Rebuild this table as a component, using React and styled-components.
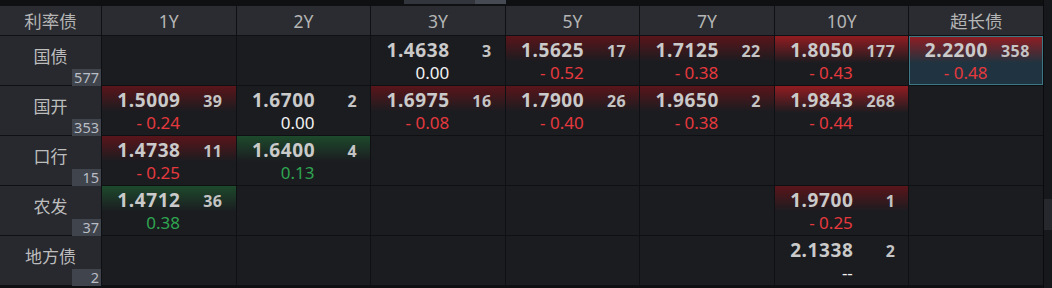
import React from 'react';
import styled, { createGlobalStyle, css } from 'styled-components';

const GlobalStyle = createGlobalStyle`
  html, body {
    margin: 0;
    padding: 0;
    background: #0e0f11;
  }
  body {
    font-family: "Noto Sans", "Noto Sans CJK SC", sans-serif;
  }
`;

const tenors = ['1Y', '2Y', '3Y', '5Y', '7Y', '10Y', '超长债'];

const rows = [
    {
        name: '国债',
        total: 577,
        cells: [
            null,
            null,
            { price: '1.4638', count: 3, change: '0.00' },
            { price: '1.5625', count: 17, change: '-0.52', tone: 'red' },
            { price: '1.7125', count: 22, change: '-0.38', tone: 'red' },
            { price: '1.8050', count: 177, change: '-0.43', tone: 'hot' },
            { price: '2.2200', count: 358, change: '-0.48', tone: 'selected' }
        ]
    },
    {
        name: '国开',
        total: 353,
        cells: [
            { price: '1.5009', count: 39, change: '-0.24', tone: 'red' },
            { price: '1.6700', count: 2, change: '0.00' },
            { price: '1.6975', count: 16, change: '-0.08', tone: 'red' },
            { price: '1.7900', count: 26, change: '-0.40', tone: 'red' },
            { price: '1.9650', count: 2, change: '-0.38', tone: 'red' },
            { price: '1.9843', count: 268, change: '-0.44', tone: 'hot' },
            null
        ]
    },
    {
        name: '口行',
        total: 15,
        cells: [
            { price: '1.4738', count: 11, change: '-0.25', tone: 'red' },
            { price: '1.6400', count: 4, change: '0.13', tone: 'green' },
            null, null, null, null, null
        ]
    },
    {
        name: '农发',
        total: 37,
        cells: [
            { price: '1.4712', count: 36, change: '0.38', tone: 'green' },
            null, null, null, null,
            { price: '1.9700', count: 1, change: '-0.25', tone: 'red' },
            null
        ]
    },
    {
        name: '地方债',
        total: 2,
        cells: [
            null, null, null, null, null,
            { price: '2.1338', count: 2, change: '--' },
            null
        ]
    }
];

const tones = {
    red: css`
        background: linear-gradient(to bottom, #5a151a 0%, #1b1c20 52%);
    `,
    hot: css`
        background: linear-gradient(to bottom, #921c21 0%, #1b1c20 55%);
    `,
    green: css`
        background: linear-gradient(to bottom, #1d4a2c 0%, #1b1c20 52%);
    `,
    selected: css`
        background: linear-gradient(to bottom, #931c22 0%, #1f3440 55%, #1f3440 100%);
        box-shadow: inset 0 0 0 1px #3e7884;
    `
};

function changeColor(change) {
    if (change.startsWith('-') && change !== '--') return '#e5393e';
    if (change === '0.00' || change === '--') return '#f2f2f2';
    return '#2fa551';
}

function formatChange(change) {
    if (change.startsWith('-') && change !== '--') return '- ' + change.slice(1);
    return change;
}

export default function App() {
    return (
        <Page>
            <GlobalStyle />
            <Main>
                <HScroll>
                    <HThumb />
                </HScroll>
                <Board>
                    <HeadCell>利率债</HeadCell>
                    {tenors.map(t => <HeadCell key={t}>{t}</HeadCell>)}
                    {rows.map(row => (
                        <React.Fragment key={row.name}>
                            <LabelCell>
                                <LabelText>{row.name}</LabelText>
                                <Badge>{row.total}</Badge>
                            </LabelCell>
                            {row.cells.map((cell, i) =>
                                cell ? (
                                    <Quote key={i} $tone={cell.tone}>
                                        <Price>{cell.price}</Price>
                                        <Count>{cell.count}</Count>
                                        <Change $color={changeColor(cell.change)}>
                                            {formatChange(cell.change)}
                                        </Change>
                                    </Quote>
                                ) : (
                                    <EmptyCell key={i} />
                                )
                            )}
                        </React.Fragment>
                    ))}
                </Board>
            </Main>
            <VScroll>
                <VThumb />
            </VScroll>
        </Page>
    );
}

const Page = styled.div`
    display: flex;
    width: 1052px;
    height: 288px;
    background: #0e0f11;
    overflow: hidden;
`;

const Main = styled.div`
    flex: 1;
    display: flex;
    flex-direction: column;
`;

const HScroll = styled.div`
    height: 6px;
    background: #0f1012;
    display: flex;
    align-items: flex-start;
`;

const HThumb = styled.div`
    margin-left: 404px;
    width: 102px;
    height: 4px;
    background: linear-gradient(to right, #32353c 0%, #32353c 70%, #464a52 70%, #464a52 100%);
`;

const Board = styled.div`
    display: grid;
    grid-template-columns: 101px repeat(7, 1fr);
    grid-template-rows: 29px repeat(5, 49px);
    gap: 1px;
    background: #0f1013;
    border-bottom: 1px solid #0f1013;
`;

const HeadCell = styled.div`
    display: flex;
    align-items: center;
    justify-content: center;
    background: #2a2c31;
    color: #b5b5b5;
    font-size: 17.5px;
`;

const LabelCell = styled.div`
    display: flex;
    flex-direction: column;
    align-items: center;
    padding-top: 9px;
    background: #27292e;
`;

const LabelText = styled.div`
    font-size: 17px;
    line-height: 24px;
    color: #bdbdbd;
`;

const Badge = styled.div`
    margin-top: auto;
    align-self: flex-end;
    width: 29px;
    height: 17px;
    box-sizing: border-box;
    padding-right: 2px;
    background: #40444c;
    color: #b9bdc5;
    font-size: 14.5px;
    line-height: 17px;
    text-align: right;
`;

const EmptyCell = styled.div`
    background: #1b1c20;
`;

const Quote = styled.div`
    display: grid;
    grid-template-columns: 78px 42px;
    grid-template-rows: 20px 20px;
    row-gap: 3px;
    align-items: baseline;
    padding-top: 4px;
    box-sizing: border-box;
    background: #1b1c20;
    ${p => p.$tone && tones[p.$tone]}
`;

const Price = styled.span`
    text-align: right;
    font-size: 19px;
    font-weight: 700;
    letter-spacing: 0.6px;
    margin-right: -0.6px;
    line-height: 20px;
    color: #cacaca;
`;

const Count = styled.span`
    text-align: right;
    font-size: 16px;
    font-weight: 700;
    letter-spacing: 0.5px;
    margin-right: -0.5px;
    line-height: 20px;
    color: #c4c4c4;
`;

const Change = styled.span`
    grid-column: 1;
    text-align: right;
    font-size: 17px;
    line-height: 20px;
    color: ${p => p.$color};
`;

const VScroll = styled.div`
    width: 8px;
    border-left: 1px solid #0a0b0d;
    background: #17181b;
    display: flex;
    flex-direction: column;
`;

const VThumb = styled.div`
    margin-top: 199px;
    height: 31px;
    background: #26282d;
`;
